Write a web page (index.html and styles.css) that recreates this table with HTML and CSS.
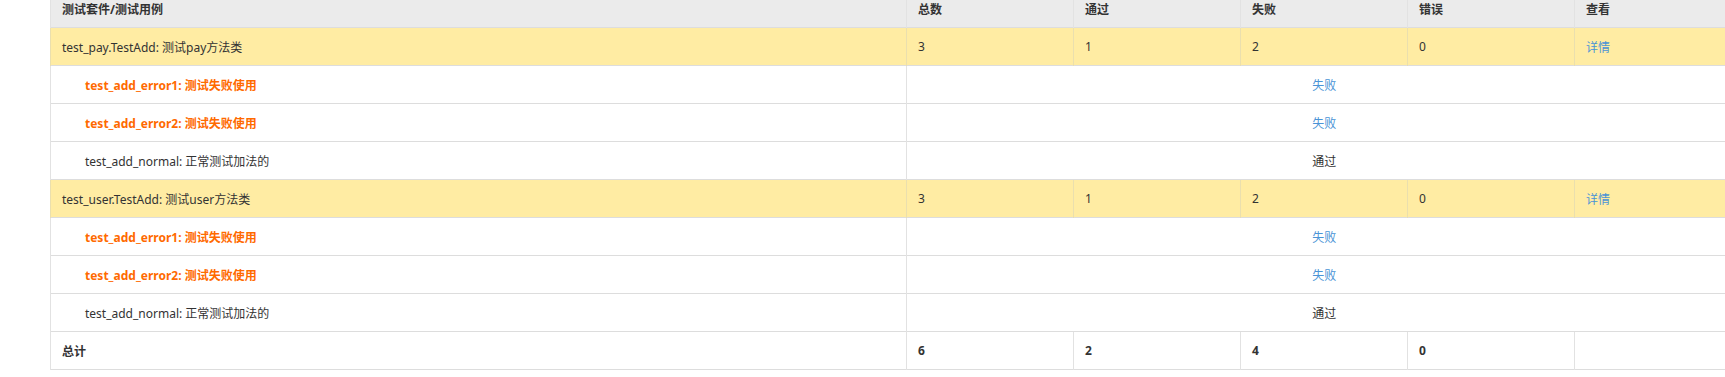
FILE: index.html
```html
<!DOCTYPE html>
<html lang="zh">
<head>
<meta charset="utf-8">
<title>测试报告</title>
<link rel="stylesheet" href="styles.css">
</head>
<body>
<div class="page">
  <table class="report">
    <colgroup>
      <col class="c-name">
      <col class="c-num"><col class="c-num"><col class="c-num"><col class="c-num"><col class="c-num">
    </colgroup>
    <thead>
      <tr class="head">
        <th>测试套件/测试用例</th><th>总数</th><th>通过</th><th>失败</th><th>错误</th><th>查看</th>
      </tr>
    </thead>
    <tbody>
      <tr class="suite">
        <td>test_pay.TestAdd: 测试pay方法类</td><td>3</td><td>1</td><td>2</td><td>0</td><td><a class="link" href="#">详情</a></td>
      </tr>
      <tr class="case">
        <td class="case-name fail">test_add_error1: 测试失败使用</td><td colspan="5" class="status"><a class="link" href="#">失败</a></td>
      </tr>
      <tr class="case">
        <td class="case-name fail">test_add_error2: 测试失败使用</td><td colspan="5" class="status"><a class="link" href="#">失败</a></td>
      </tr>
      <tr class="case">
        <td class="case-name">test_add_normal: 正常测试加法的</td><td colspan="5" class="status">通过</td>
      </tr>
      <tr class="suite">
        <td>test_user.TestAdd: 测试user方法类</td><td>3</td><td>1</td><td>2</td><td>0</td><td><a class="link" href="#">详情</a></td>
      </tr>
      <tr class="case">
        <td class="case-name fail">test_add_error1: 测试失败使用</td><td colspan="5" class="status"><a class="link" href="#">失败</a></td>
      </tr>
      <tr class="case">
        <td class="case-name fail">test_add_error2: 测试失败使用</td><td colspan="5" class="status"><a class="link" href="#">失败</a></td>
      </tr>
      <tr class="case">
        <td class="case-name">test_add_normal: 正常测试加法的</td><td colspan="5" class="status">通过</td>
      </tr>
      <tr class="total">
        <td>总计</td><td>6</td><td>2</td><td>4</td><td>0</td><td></td>
      </tr>
    </tbody>
  </table>
</div>
</body>
</html>
```
FILE: styles.css
```css
html, body {
  margin: 0;
  padding: 0;
  background: #fff;
  overflow: hidden;
}
body {
  font-family: "Noto Sans", "Noto Sans CJK SC", sans-serif;
  font-size: 12px;
  color: #333;
}
.page {
  padding-left: 50px;
  margin-top: -11px;
}
.report {
  border-collapse: collapse;
  table-layout: fixed;
  width: 1691px;
  border-left: 1px solid #ddd;
  border-bottom: 1px solid #ddd;
}
.c-name { width: 856px; }
.c-num { width: 167px; }
.report th,
.report td {
  height: 37px;
  padding: 0 11px;
  text-align: left;
  vertical-align: middle;
  border-top: 1px solid #ddd;
  border-left: 1px solid #e2e2e2;
  white-space: nowrap;
}
.head th {
  background: #ebebeb;
  font-weight: bold;
  color: #333;
}
.suite td {
  background: #ffeca3;
  border-left-color: #eadfae;
}
.case-name {
  padding-left: 34px !important;
}
.fail {
  color: #ff6a00;
  font-weight: bold;
}
.status {
  text-align: center !important;
}
.link {
  color: #4a93d6;
  text-decoration: none;
}
.total td {
  font-weight: bold;
}
```
